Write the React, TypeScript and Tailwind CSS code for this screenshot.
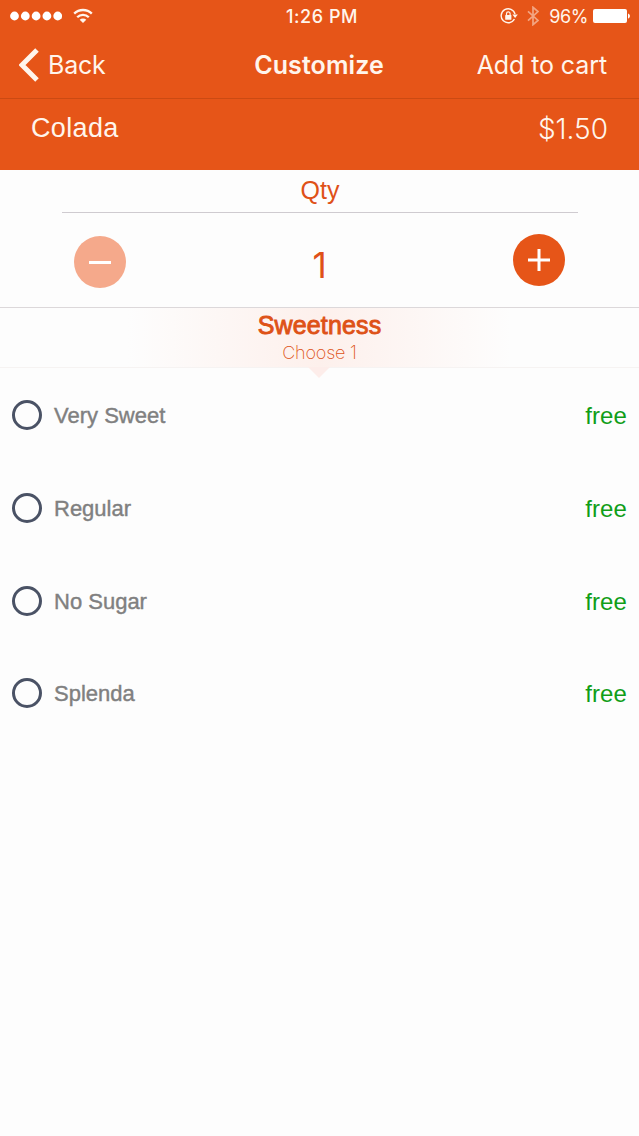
import { memo, useState } from "react";

const listOption = ["Very Sweet", "Regular", "No Sugar", "Splenda"];

function StatusBar() {
  return (
    <div className="statusBar grid grid-cols-3 items-center h-8 pl-[10px] pr-[9px] font-['Inter',sans-serif] text-[18px]">
      <div className="flex items-center">
        <svg width="52" height="10" viewBox="0 0 52 10" fill="white">
          {[...Array(5)].map((_, i: number) => (
            <circle key={i} cx={4.5 + i * 10.8} cy="5" r="4.4" />
          ))}
        </svg>
        <svg
          width="20"
          height="16"
          viewBox="0 0 20 16"
          className="ml-[11px]"
          fill="none"
          stroke="currentColor"
          strokeWidth="2.3"
        >
          <path d="M1.2 5.6a12.5 12.5 0 0 1 17.6 0" />
          <path d="M4.2 9.2a8.2 8.2 0 0 1 11.6 0" />
          <path
            d="M10 15 6.7 11.8a4.6 4.6 0 0 1 6.6 0z"
            fill="currentColor"
            stroke="none"
          />
        </svg>
      </div>
      <p className="text-center font-medium tracking-[0.55px] whitespace-nowrap pl-[4px]">
        1:26 PM
      </p>
      <div className="flex items-center justify-end">
        <svg
          width="18"
          height="16"
          viewBox="0 0 18 16"
          fill="none"
          stroke="currentColor"
          strokeWidth="1.4"
        >
          <path d="M14.4 11A7 7 0 1 1 15 6.2" />
          <path d="M12.4 6.6h5.4l-2.7 3.4z" fill="currentColor" stroke="none" />
          <rect
            x="5.2"
            y="7"
            width="6.2"
            height="4.8"
            rx="0.6"
            fill="currentColor"
            stroke="none"
          />
          <path d="M6.5 7.2V5.7a1.8 1.8 0 0 1 3.6 0v1.5" strokeWidth="1.2" />
        </svg>
        <svg
          width="12"
          height="20"
          viewBox="0 0 12 20"
          className="ml-[9px] opacity-50"
          fill="none"
          stroke="currentColor"
          strokeWidth="1.7"
        >
          <path d="M1 5.3 11 14.4 6 18.7V1.3L11 5.6 1 14.7" />
        </svg>
        <p className="ml-[10px] tracking-[-0.4px]">96%</p>
        <svg
          width="37"
          height="16"
          viewBox="0 0 37 16"
          className="ml-[5px]"
          fill="white"
        >
          <rect x="0" y="1" width="34" height="14" rx="2" />
          <path d="M35 5.4c2.6 0.8 2.6 4.4 0 5.2z" />
        </svg>
      </div>
    </div>
  );
}

function NavBar() {
  return (
    <div className="navBar grid grid-cols-[1fr_auto_1fr] items-center h-[67px] pl-[19px] pr-[32px] border-b border-[#cb4a13] font-['Inter',sans-serif] text-[25px]">
      <button className="flex items-center">
        <svg
          width="20"
          height="34"
          viewBox="0 0 20 34"
          fill="none"
          stroke="currentColor"
          strokeWidth="5"
        >
          <path d="M18 2 3 17 18 32" />
        </svg>
        <span className="ml-[9px] pt-[2px] tracking-[-0.2px]">Back</span>
      </button>
      <h1 className="font-semibold ml-[12px] pt-[2px] tracking-[0.1px]">
        Customize
      </h1>
      <button className="text-right pt-[2px] tracking-[-0.1px]">
        Add to cart
      </button>
    </div>
  );
}

function App() {
  const [qty, setQty] = useState(1);
  const [selected, setSelected] = useState("");

  return (
    <div className="min-h-screen bg-[#fdfdfd] font-['Liberation_Sans',Arial,sans-serif]">
      <div className="header h-[170px] bg-[#e65518] text-[#fff5ec]">
        <StatusBar />
        <NavBar />
        <div className="flex justify-between items-center h-[58px] px-[31px]">
          <p className="text-[27px] tracking-[0.35px]">Colada</p>
          <p className="pt-[2px] font-['Inter',sans-serif] font-light text-[28px]">
            $1.50
          </p>
        </div>
      </div>

      <div className="quantity h-[138px] border-b border-[#dcd8da] pl-[62px] pr-[61px] text-[#df5118]">
        <p className="h-[43px] border-b border-[#cfcbd0] text-center text-[25px] leading-[40px]">
          Qty
        </p>
        <div className="flex justify-between pt-[21px] pl-[12px] pr-[13px]">
          <button
            className="mt-[2px] w-[52px] h-[52px] rounded-full bg-[#f5a98b] flex items-center justify-center"
            onClick={() => setQty(Math.max(1, qty - 1))}
          >
            <span className="w-[22px] h-[3px] bg-white" />
          </button>
          <p className="font-['Inter',sans-serif] text-[35px] leading-[62px]">
            {qty}
          </p>
          <button
            className="w-[52px] h-[52px] rounded-full bg-[#e65518] flex items-center justify-center"
            onClick={() => setQty(qty + 1)}
          >
            <svg
              width="22"
              height="22"
              viewBox="0 0 22 22"
              stroke="white"
              strokeWidth="3"
            >
              <path d="M0 11h22M11 0v22" />
            </svg>
          </button>
        </div>
      </div>

      <div className="relative h-[60px] border-b border-[#f6f3f2] bg-linear-to-r from-[#fdfdfd] from-20% via-[#fdf0ec] to-[#fdfdfd] to-80% text-center text-[#de5217]">
        <p className="pt-[2px] text-[25px] leading-[30px] tracking-[0.15px] [-webkit-text-stroke:0.9px_#de5217]">
          Sweetness
        </p>
        <p className="pt-[1px] text-[18px] leading-[24px] tracking-[-0.2px] font-['Inter',sans-serif] font-extralight">
          Choose 1
        </p>
        <svg
          width="22"
          height="11"
          viewBox="0 0 22 11"
          className="absolute left-[308px] top-[59px]"
        >
          <path d="M0 0h22L11 11z" fill="#fdedea" />
        </svg>
      </div>

      <div className="listOption pt-[1px]">
        {listOption.map((name) => (
          <button
            key={name}
            className="w-full h-[92.67px] px-[12px] flex items-center"
            onClick={() => setSelected(name)}
          >
            <span className="w-[30px] h-[30px] rounded-full border-3 border-[#4a5265] flex items-center justify-center">
              {selected === name && (
                <span className="w-4 h-4 rounded-full bg-[#4a5265]" />
              )}
            </span>
            <span className="ml-[12px] pt-[1px] text-[22px] text-[#808080] [-webkit-text-stroke:0.4px_#808080]">
              {name}
            </span>
            <span className="ml-auto pt-[2px] text-[24px] tracking-[0.1px] text-[#109e18]">
              free
            </span>
          </button>
        ))}
      </div>
    </div>
  );
}

export default memo(App);
